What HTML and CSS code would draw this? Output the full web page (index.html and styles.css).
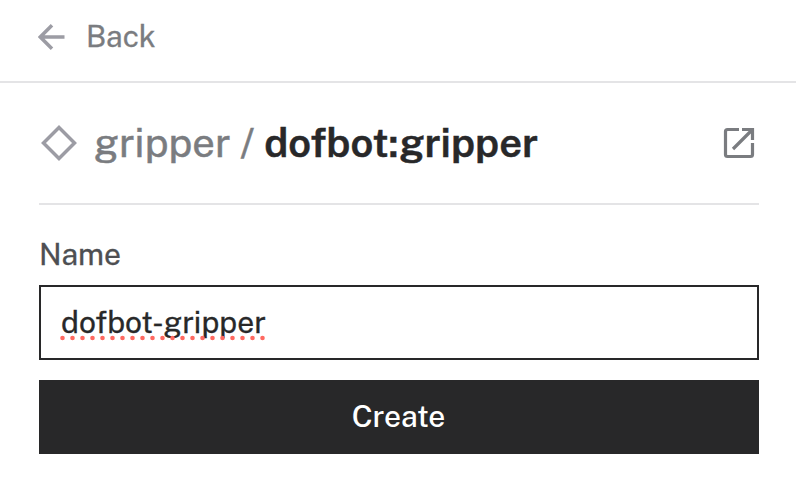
FILE: index.html
```html
<!DOCTYPE html>
<html lang="en">
<head>
<meta charset="utf-8">
<title>Create component</title>
<link rel="stylesheet" href="styles.css">
</head>
<body>
<header class="topbar">
  <svg class="arrow" viewBox="0 0 28 28"><path d="M26.500 14H3M14 2.200L2.300 14L14 25.800"/></svg>
  <span class="back">Back</span>
</header>
<main class="content">
  <div class="heading">
    <svg class="diamond" viewBox="0 0 40 40"><path d="M20 4.500L35.500 20L20 35.500L4.500 20Z"/></svg>
    <h1 class="title"><span class="type">gripper /</span> <span class="model">dofbot:gripper</span></h1>
    <svg class="open" viewBox="0 0 32 32"><path d="M16 2.500H4.500Q2.500 2.500 2.500 4.500V27.500Q2.500 29.500 4.500 29.500H27.500Q29.500 29.500 29.500 27.500V16M19 2.500H29.500V13M28.500 3.500L10 22"/></svg>
  </div>
  <label class="label" for="name">Name</label>
  <div class="field" id="name"><span class="value">dofbot-gripper</span><svg class="squiggle" viewBox="0 0 206 4"><path d="M1.500 2H204"/></svg></div>
  <button class="create"><span class="create-text">Create</span></button>
</main>
</body>
</html>
```
FILE: styles.css
```css
* { box-sizing: border-box; }
body { margin: 0; background: #fff; color: #282829; font-family: "Public Sans", Inter, "Liberation Sans", sans-serif; }
svg { fill: none; flex: none; display: block; }
.topbar { height: 83px; border-bottom: 2px solid #e4e4e6; padding: 0 0 8px 38px; display: flex; align-items: center; }
.arrow { width: 28px; height: 28px; stroke: #9c9ca4; stroke-width: 3.5; }
.back { margin: 0 0 2px 20px; font-size: 30px; color: #7a7c80; -webkit-text-stroke: 0.3px; }
.content { padding: 0 37px 0 39px; }
.heading { height: 122px; border-bottom: 2px solid #e4e4e6; display: flex; align-items: center; }
.diamond { width: 40px; height: 40px; stroke: #9c9ca4; stroke-width: 3.5; }
.title { margin: 0 auto 2px 15px; font-size: 40px; font-weight: 400; white-space: nowrap; }
.type { color: #7a7c80; -webkit-text-stroke: 0.5px; }
.model { font-weight: 600; -webkit-text-stroke: 0.5px; }
.open { width: 32px; height: 32px; margin-right: 4px; stroke: #7a7c80; stroke-width: 3.2; }
.label { display: block; height: 80px; padding-top: 29px; font-size: 30px; line-height: 40px; color: #4e4f52; -webkit-text-stroke: 0.3px; }
.field { position: relative; height: 75px; border: 2px solid #282829; padding: 0 0 2px 20px; display: flex; align-items: center; font-size: 30px; -webkit-text-stroke: 0.3px; }
.squiggle { position: absolute; left: 20px; top: 49px; width: 206px; height: 4px; overflow: visible; stroke: #ff6961; stroke-width: 4.6; stroke-linecap: round; stroke-dasharray: 0 10; }
.create { display: flex; align-items: center; justify-content: center; width: 100%; height: 74px; margin-top: 20px; padding: 0 1px 2px 0; border: 0; background: #282829; color: #fff; font: 500 30px "Public Sans", Inter, sans-serif; letter-spacing: -0.1px; }
```
